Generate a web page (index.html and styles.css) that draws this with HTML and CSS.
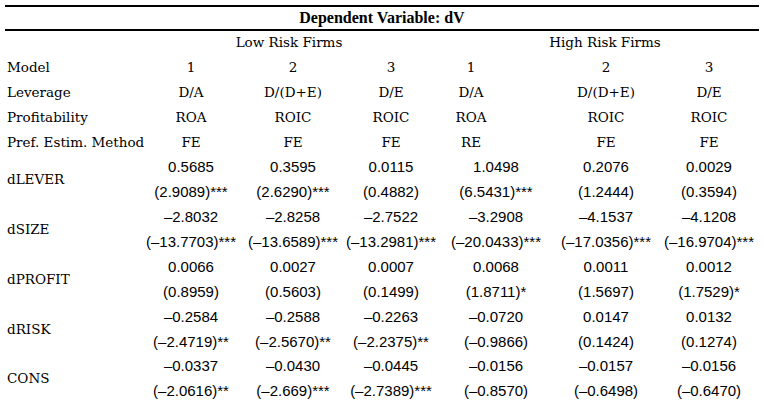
FILE: index.html
```html
<!DOCTYPE html>
<html>
<head>
<meta charset="utf-8">
<title>Dependent Variable: dV</title>
<link rel="stylesheet" href="styles.css">
</head>
<body>
<div class="table">
  <div class="title">Dependent Variable: dV</div>

  <div class="lab"></div>
  <div class="grp">Low Risk Firms</div>
  <div class="grp grp-high">High Risk Firms</div>

  <div class="lab">Model</div>
  <div class="h">1</div><div class="h">2</div><div class="h">3</div>
  <div class="h h4">1</div><div class="h">2</div><div class="h">3</div>

  <div class="lab">Leverage</div>
  <div class="h">D/A</div><div class="h">D/(D+E)</div><div class="h">D/E</div>
  <div class="h h4">D/A</div><div class="h">D/(D+E)</div><div class="h">D/E</div>

  <div class="lab">Profitability</div>
  <div class="h">ROA</div><div class="h">ROIC</div><div class="h">ROIC</div>
  <div class="h h4">ROA</div><div class="h">ROIC</div><div class="h">ROIC</div>

  <div class="lab">Pref. Estim. Method</div>
  <div class="h">FE</div><div class="h">FE</div><div class="h">FE</div>
  <div class="h h4">RE</div><div class="h">FE</div><div class="h">FE</div>

  <div class="lab var">dLEVER</div>
  <div class="n">0.5685</div><div class="n">0.3595</div><div class="n">0.0115</div>
  <div class="n">1.0498</div><div class="n">0.2076</div><div class="n">0.0029</div>
  <div class="n">(2.9089)***</div><div class="n">(2.6290)***</div><div class="n">(0.4882)</div>
  <div class="n">(6.5431)***</div><div class="n">(1.2444)</div><div class="n">(0.3594)</div>

  <div class="lab var">dSIZE</div>
  <div class="n">–2.8032</div><div class="n">–2.8258</div><div class="n">–2.7522</div>
  <div class="n">–3.2908</div><div class="n">–4.1537</div><div class="n">–4.1208</div>
  <div class="n">(–13.7703)***</div><div class="n">(–13.6589)***</div><div class="n">(–13.2981)***</div>
  <div class="n">(–20.0433)***</div><div class="n">(–17.0356)***</div><div class="n">(–16.9704)***</div>

  <div class="lab var">dPROFIT</div>
  <div class="n">0.0066</div><div class="n">0.0027</div><div class="n">0.0007</div>
  <div class="n">0.0068</div><div class="n">0.0011</div><div class="n">0.0012</div>
  <div class="n">(0.8959)</div><div class="n">(0.5603)</div><div class="n">(0.1499)</div>
  <div class="n">(1.8711)*</div><div class="n">(1.5697)</div><div class="n">(1.7529)*</div>

  <div class="lab var">dRISK</div>
  <div class="n">–0.2584</div><div class="n">–0.2588</div><div class="n">–0.2263</div>
  <div class="n">–0.0720</div><div class="n">0.0147</div><div class="n">0.0132</div>
  <div class="n">(–2.4719)**</div><div class="n">(–2.5670)**</div><div class="n">(–2.2375)**</div>
  <div class="n">(–0.9866)</div><div class="n">(0.1424)</div><div class="n">(0.1274)</div>

  <div class="lab var">CONS</div>
  <div class="n">–0.0337</div><div class="n">–0.0430</div><div class="n">–0.0445</div>
  <div class="n">–0.0156</div><div class="n">–0.0157</div><div class="n">–0.0156</div>
  <div class="n">(–2.0616)**</div><div class="n">(–2.669)***</div><div class="n">(–2.7389)***</div>
  <div class="n">(–0.8570)</div><div class="n">(–0.6498)</div><div class="n">(–0.6470)</div>
</div>
</body>
</html>
```

FILE: styles.css
```css
html, body {
  margin: 0;
  padding: 0;
  background: #ffffff;
  color: #000000;
}

.table {
  margin: 5px 5px 0 5px;
  width: 754px;
  display: grid;
  grid-template-columns: 134px 104px 100px 96px 114px 106px 100px;
  grid-auto-rows: 24.9px;
  font-family: "DejaVu Serif", serif;
  font-size: 13.5px;
}

.title {
  grid-column: 1 / -1;
  height: 22px;
  margin-bottom: 3px;
  border-top: 2px solid #000;
  border-bottom: 2px solid #000;
  display: flex;
  align-items: center;
  justify-content: center;
  font-family: "Liberation Serif", serif;
  font-weight: bold;
  font-size: 16px;
}

.lab {
  display: flex;
  align-items: center;
  padding-left: 2px;
  white-space: nowrap;
}

.var {
  grid-column: 1;
  grid-row: span 2;
}

.grp {
  grid-column: span 3;
  display: flex;
  align-items: center;
  justify-content: center;
  white-space: nowrap;
}

.grp-high {
  padding-left: 12px;
}

.h,
.n {
  display: flex;
  align-items: center;
  justify-content: center;
  white-space: nowrap;
}

.h4 {
  padding-right: 50px;
}

.n {
  font-family: "Liberation Sans", Arial, sans-serif;
  font-size: 15px;
}
```
